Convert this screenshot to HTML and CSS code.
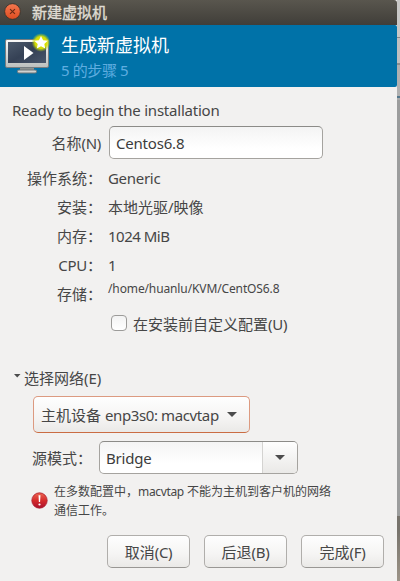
FILE: index.html
```html
<!DOCTYPE html>
<html lang="zh-CN">
<head>
<meta charset="utf-8">
<title>新建虚拟机</title>
<link rel="stylesheet" href="styles.css">
</head>
<body>
<div class="desktop">
<main class="window">
  <header class="titlebar">
    <svg class="close" viewBox="0 0 16 16"><defs><linearGradient id="cl" x1="0" y1="0" x2="0" y2="1"><stop offset="0" stop-color="#f5784f"/><stop offset="1" stop-color="#de4c20"/></linearGradient></defs><circle cx="8" cy="8" r="7.4" fill="url(#cl)" stroke="#37332b" stroke-width=".8"/><path d="M5.7 5.7l4.6 4.6M10.3 5.7l-4.6 4.6" stroke="#6b2a14" stroke-width="1.1"/></svg>
    <h1>新建虚拟机</h1>
  </header>
  <section class="banner">
    <svg class="monitor" viewBox="0 0 50 44"><defs>
      <linearGradient id="fr" x1="0" y1="0" x2="0" y2="1"><stop offset="0" stop-color="#fafafa"/><stop offset="1" stop-color="#bcbfbd"/></linearGradient>
      <linearGradient id="sc" x1="0" y1="0" x2="1" y2="1"><stop offset="0" stop-color="#4c5a6c"/><stop offset=".5" stop-color="#354155"/><stop offset="1" stop-color="#49566b"/></linearGradient>
      <radialGradient id="gl"><stop offset="0" stop-color="#f4f000"/><stop offset=".65" stop-color="#d8e000" stop-opacity=".95"/><stop offset="1" stop-color="#a8cc20" stop-opacity="0"/></radialGradient></defs>
      <path d="M20 35h14v4h-14z" fill="#8e918f"/><rect x="17.5" y="38" width="19" height="3" rx="1.3" fill="#d0d2d0" stroke="#6d7477"/>
      <rect x="5.5" y="7.5" width="43" height="28" rx="1.5" fill="url(#fr)" stroke="#777d80"/>
      <rect x="8" y="10" width="38" height="21" fill="url(#sc)"/>
      <path d="M24 14l9.5 7-9.5 7z" fill="#fff"/>
      <circle cx="41" cy="10.5" r="9.4" fill="url(#gl)"/>
      <path d="M41 4l2.1 4.2 4.6.6-3.4 3.2.9 4.6-4.2-2.3-4.2 2.3.9-4.6-3.4-3.2 4.6-.6z" fill="#fff"/></svg>
    <div class="heading"><h2>生成新虚拟机</h2><p>5 的步骤 5</p></div>
  </section>
  <section class="content">
    <p class="ready">Ready to begin the installation</p>
    <div class="form">
      <label class="key name" for="n">名称<span class="paren">(N)</span></label><input id="n" class="entry" value="Centos6.8">
      <span class="key">操作系统：</span><span class="generic">Generic</span>
      <span class="key">安装：</span><span>本地光驱/映像</span>
      <span class="key">内存：</span><span class="memory">1024 MiB</span>
      <span class="key"><span class="paren">CPU</span>：</span><span>1</span>
      <span class="key">存储：</span><span class="path">/home/huanlu/KVM/CentOS6.8</span>
    </div>
    <label class="check"><i class="box"></i>在安装前自定义配置<span class="paren">(U)</span></label>
    <div class="expander"><svg width="7" height="5" viewBox="0 0 7 5"><path d="M0 0h6.5L3.2 3.5z" fill="#4c4c4c"/></svg><span>选择网络(E)</span></div>
    <button class="device"><span>主机设备 <span class="iface">enp3s0: macvtap</span></span><i class="arrow"></i></button>
    <div class="mode"><span>源模式：</span><div class="combo"><span class="bridge">Bridge</span><b><i class="arrow"></i></b></div></div>
    <div class="warning">
      <svg width="17" height="17" viewBox="0 0 17 17"><defs><linearGradient id="er" x1="0" y1="0" x2="0" y2="1"><stop offset="0" stop-color="#eb6652"/><stop offset=".5" stop-color="#d62b2b"/><stop offset="1" stop-color="#a90f2d"/></linearGradient></defs><circle cx="8.5" cy="8.5" r="7.7" fill="url(#er)" stroke="#ad1c2c" stroke-width=".8"/><path d="M7.5 3.2h2l-.4 6.7H7.9z" fill="#fff"/><circle cx="8.5" cy="12.5" r="1.1" fill="#fff"/></svg>
      <p>在多数配置中，<span class="tap">macvtap</span> 不能为主机到客户机的网络<br>通信工作。</p>
    </div>
    <footer class="actions"><button>取消<span class="paren">(C)</span></button><button>后退<span class="paren">(B)</span></button><button>完成<span class="paren">(F)</span></button></footer>
  </section>
</main>
<aside class="behind"></aside>
</div>
</body>
</html>
```
FILE: styles.css
```css
* { box-sizing: border-box; }
body { margin: 0; font: 15px/20px "Noto Sans", "Noto Sans CJK SC", sans-serif; color: #464646; }
h1, h2, p { margin: 0; font-weight: 400; }
i { font-style: normal; }
.desktop { display: flex; width: 400px; height: 581px; overflow: hidden; background: #9c9d9d; }
.window { width: 397px; height: 581px; background: #f2f1f0; }
.behind { width: 3px; background: linear-gradient(#c9c8c7 0 37px, #888 37px 38px, #c0c0c0 38px 63px, #8d8d8d 63px 65px, #b0b0b0 65px 96px, #56788c 96px 98px, #aaa 98px 100px, #9c9d9d 100px 516px, #77736c 516px 530px, #9d9488); }
.titlebar { display: flex; align-items: center; height: 25px; padding-left: 4px; background: linear-gradient(#59564e, #403e39); border-radius: 0 3px 0 0; }
.close { width: 17px; height: 17px; margin-top: -2px; }
.titlebar h1 { margin: -1px 0 0 11px; font-size: 15px; line-height: 24px; color: #dfdbd2; -webkit-text-stroke: .4px #dfdbd2; }
.banner { display: flex; height: 62px; background: #0072a8; border-radius: 0 2px 2px 0; }
.monitor { width: 50px; height: 44px; margin-top: 7px; flex: none; }
.heading { padding: 7px 0 0 11px; }
.heading h2 { font-size: 18px; line-height: 27px; color: #fff; }
.heading p { font-size: 15px; line-height: 22px; letter-spacing: -.4px; color: #5fade0; }
.content { padding: 13px 0 0 12px; }
.ready { line-height: 20px; letter-spacing: -.22px; }
.form { display: grid; grid-template-columns: 90px 1fr; grid-template-rows: 41px repeat(5, 29px); column-gap: 6px; padding-top: 2px; align-items: center; }
.key { text-align: right; white-space: nowrap; }
.name { margin-right: 1px; }
.paren { letter-spacing: -.3px; }
.generic { letter-spacing: -.3px; }
.memory { letter-spacing: -.5px; }
.entry { width: 214px; height: 33px; margin-left: 1px; padding: 0 6px; border: 1px solid #a5a39f; border-top-color: #8c8b88; border-radius: 5px; background: linear-gradient(#f4f4f4, #fff 70%); font: inherit; letter-spacing: -.2px; color: #3c3c3c; }
.path { font-size: 12px; line-height: 16px; letter-spacing: -.12px; margin-bottom: 10px; }
.check { display: flex; align-items: center; height: 20px; margin: 6px 0 0 99px; }
.box { width: 16px; height: 16px; margin: -2px 6px 0 0; border: 1px solid #9c9b99; border-radius: 4px; background: linear-gradient(#f3f3f3, #fff); }
.expander { display: flex; align-items: center; gap: 3px; height: 20px; margin: 34px 0 0 2px; }
.expander svg { margin-top: -4px; }
button { padding: 0; border: 1px solid #b0aeab; border-bottom-color: #999794; border-radius: 5px; background: linear-gradient(#fefefe, #f5f4f3 60%, #eae9e7); color: #464646; font: inherit; white-space: nowrap; }
.device { display: flex; align-items: center; justify-content: space-between; width: 217px; height: 37px; margin: 8px 0 0 21px; padding: 0 12px 0 7px; border-color: #dc9a80; border-bottom-color: #ca6c43; }
.iface { letter-spacing: -.38px; }
.arrow { width: 10px; height: 5px; background: #4c4c4c; clip-path: polygon(0 0, 100% 0, 50% 100%); }
.mode { display: flex; align-items: center; margin: 8px 0 0 20px; }
.combo { display: flex; align-items: center; width: 199px; height: 33px; margin-left: 7px; border: 1px solid #a5a39f; border-top-color: #8c8b88; border-radius: 5px; background: linear-gradient(#f4f4f4, #fff 70%); overflow: hidden; }
.bridge { flex: 1; padding-left: 6px; letter-spacing: -.2px; color: #3c3c3c; }
.combo b { display: flex; align-items: center; justify-content: center; width: 35px; height: 31px; border-left: 1px solid #d4d3d1; background: linear-gradient(#fefefe, #eae9e7); }
.warning { display: flex; align-items: center; gap: 6px; height: 38px; margin: 8px 0 0 19px; }
.warning svg { margin-top: -2px; }
.warning p { font-size: 12px; line-height: 19px; white-space: nowrap; }
.tap { letter-spacing: -.35px; }
.actions { display: flex; gap: 14px; margin: 15px 0 0 95px; }
.actions button { width: 83px; height: 33px; }
```
